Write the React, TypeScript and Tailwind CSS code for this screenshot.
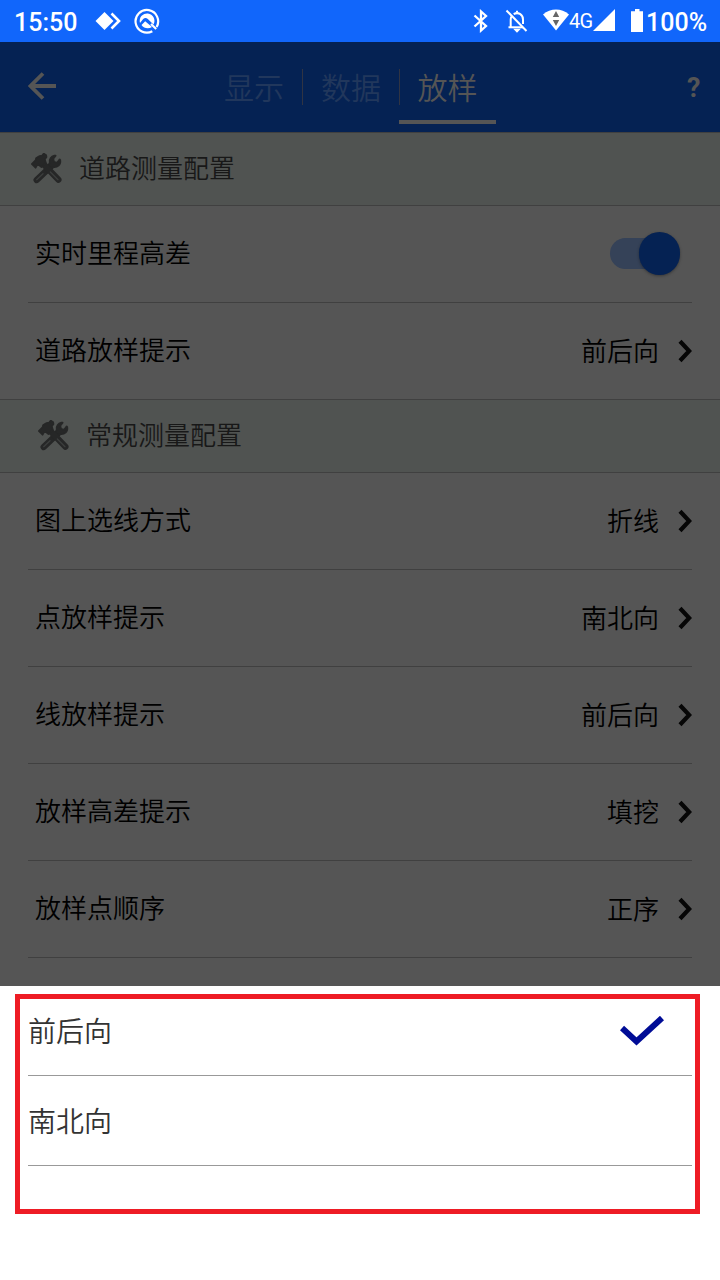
const stack = "font-['Roboto','Noto_Sans_CJK_SC',sans-serif]";

const roadItems = [{ label: "道路放样提示", value: "前后向" }];

const commonItems = [
  { label: "图上选线方式", value: "折线" },
  { label: "点放样提示", value: "南北向" },
  { label: "线放样提示", value: "前后向" },
  { label: "放样高差提示", value: "填挖" },
  { label: "放样点顺序", value: "正序" },
];

const options = [
  { label: "前后向", checked: true },
  { label: "南北向", checked: false },
];

const ToolsIcon = () => (
  <svg viewBox="0 0 93 93" className="mb-px h-[31px] w-[31px] shrink-0" fill="none">
    {/* wrench */}
    <path d="M17 81 L62 38" stroke="#262727" strokeWidth="19" strokeLinecap="round" />
    <path d="M70 8 C61 10 54 18 56 29 L51 39 L60 47 L67 42 C79 44 90 35 88 22 L86 19 L78 29 L69 26 L67 17 L74 8 Z" fill="#262727" stroke="#262727" strokeWidth="5" strokeLinejoin="round" />
    <path d="M17 80 L36 62" stroke="#3c3e3d" strokeWidth="4" strokeLinecap="round" />
    {/* hammer */}
    <path d="M36 32 L82 80" stroke="#262727" strokeWidth="19" strokeLinecap="round" />
    <path d="M2 33 L13 22 L15 15 C22 9 28 7 33 7 L38 1 L46 6 L47 12 L42 19 L45 29 L31 43 L20 34 L14 45 Z" fill="#262727" stroke="#262727" strokeWidth="4" strokeLinejoin="round" />
    <path d="M58 57 L81 80" stroke="#3c3e3d" strokeWidth="4" strokeLinecap="round" />
  </svg>
);

const Chevron = () => (
  <svg viewBox="0 0 14 24" className="mb-0.5 h-6 w-3.5" fill="none" stroke="#060606" strokeWidth="4.2">
    <path d="M2 2.3 L11.2 12 L2 21.7" />
  </svg>
);

const SectionHeader = ({ title, indent }: { title: string; indent: string }) => (
  <div className={`flex h-[73px] items-center border-b border-[#404040] bg-[#505351] ${indent}`}>
    <ToolsIcon />
    <h2 className="ml-[17px] text-[26px] leading-none text-[#181818]">{title}</h2>
  </div>
);

const Row = ({ label, value, last }: { label: string; value: string; last?: boolean }) => (
  <div className={last ? "border-b border-[#404040]" : ""}>
    <div className={`mx-7 flex items-center justify-between pl-[7px] ${last ? "h-24" : "h-[97px] border-b border-[#404040]"}`}>
      <span className="text-[26px] leading-none text-black">{label}</span>
      <div className="flex items-center gap-[19px] pt-px">
        <span className="pt-px text-[26px] leading-none text-black">{value}</span>
        <Chevron />
      </div>
    </div>
  </div>
);

const StatusBar = () => (
  <div className="flex h-[42px] items-center bg-[#1166fb] pl-3.5 text-white">
    <span className="w-[63px] pt-[3px] text-[25px] font-medium leading-none">15:50</span>
    <svg viewBox="0 0 26 20" className="ml-[18px] h-5 w-[26px]">
      <path d="M0.5 10 L9.5 1 L18.5 10 L9.5 19 Z" fill="white" />
      <path d="M16.5 2.5 L24 10 L16.5 17.5" fill="none" stroke="white" strokeWidth="2.6" />
    </svg>
    <svg viewBox="0 0 26 26" className="ml-[13px] h-[26px] w-[26px]" fill="none">
      <path d="M18.3 23.2 A11.3 11.3 0 1 1 22.6 19" stroke="white" strokeWidth="2.2" />
      <path d="M6 15 A7.4 7.4 0 1 1 19.5 16.5 L13.8 11 C12 9.4 10.2 10 8.8 11.5 Z" fill="white" />
      <path d="M7.5 17 L11.2 13.2 L18 19 C14.5 21.300 9.8 20.5 7.5 17 Z" fill="white" />
      <path d="M17 16 L22.200 21" stroke="white" strokeWidth="2.2" />
    </svg>
    {/* right side indicators */}
    <div className="ml-auto flex items-center">
      <svg viewBox="0 0 16 24" className="h-6 w-4" fill="none" stroke="white" strokeWidth="2.3">
        <path d="M1.5 6.5 L13 17 L8 21.5 V2.5 L13 7 L1.5 17.5" />
      </svg>
      <svg viewBox="0 0 24 24" className="ml-4 h-6 w-6" fill="none" stroke="white" strokeWidth="2">
        <path d="M1.5 1.5 L21.5 22" />
        <path d="M3.5 18.3 H18" />
        <path d="M5.7 18 V10.5 C5.7 9.2 6 8.2 6.7 7.2" />
        <path d="M8.7 5.2 C13 2.5 18 5.5 18 10.5 V15" />
        <path d="M9.8 20.5 H14.2 L12 22.8 Z M11 2.4 H13" fill="white" strokeWidth="1.4" />
      </svg>
      <svg viewBox="0 0 26 22" className="mb-[3px] ml-[14px] h-[22px] w-[26px]">
        <path d="M0 5.5 C7.5 -1.2 18.5 -1.2 26 5.5 L13 21.5 Z" fill="white" />
        <path d="M13 2 L16.2 8 H9.8 Z M13 17 L16.2 11 H9.8 Z" fill="#666" />
      </svg>
      <span className="w-6 text-[20px] font-normal leading-none tracking-[-0.8px]">4G</span>
      <svg viewBox="0 0 22 22" className="mb-0.5 h-[22px] w-[22px]">
        <path d="M22 0 V22 H0 Z" fill="white" />
      </svg>
      <svg viewBox="0 0 12 23" className="mb-0.5 ml-4 h-[23px] w-3">
        <path d="M4 0 H8.5 V2.3 H12 V23 H0 V2.3 H4 Z" fill="white" />
      </svg>
      <span className="ml-[3px] w-[74px] pt-[3px] text-[25px] font-medium leading-none">100%</span>
    </div>
  </div>
);

const Header = () => (
  <div className="flex h-[91px] items-center border-b border-[#404040] bg-[#052253] pl-7">
    <svg viewBox="0 0 28 28" className="mb-[3px] h-7 w-7" fill="none" stroke="#555555" strokeWidth="3.8">
      <path d="M28 14 H3 M15 1.5 L2.5 14 L15 26.5" />
    </svg>
    <nav className="ml-[150px] flex h-full items-center text-[30px] leading-none text-[#21375c]">
      <span className="flex h-9 w-[97px] items-center justify-center border-r border-[#303443] pt-[3px]">显示</span>
      <span className="flex h-9 w-[97px] items-center justify-center border-r border-[#303443] pt-[3px]">数据</span>
      <span className="relative flex h-9 w-[97px] items-center justify-center pr-0.5 pt-[3px] text-[#555555]">
        放样
        <span className="absolute -left-px top-[51px] h-1 w-[97px] bg-[#555555]" />
      </span>
    </nav>
    <span className="ml-auto w-[33px] pt-[3px] text-[27px] font-bold leading-none text-[#555555]">?</span>
  </div>
);

const App = () => {
  return (
    <div className={`flex h-[1280px] w-[720px] flex-col overflow-hidden bg-white font-[350] ${stack}`} lang="zh-CN">
      <StatusBar />
      <div className="h-[944px] bg-[#555555]">
        <Header />

        <SectionHeader title="道路测量配置" indent="pl-[31px]" />
        <div className="mx-7 flex h-[97px] items-center justify-between border-b border-[#404040] pl-[7px]">
          <span className="text-[26px] leading-none text-black">实时里程高差</span>
          <div className="mb-px mr-3 flex h-[43px] w-[70px] items-center">
            <div className="flex h-[31px] w-[66px] items-center rounded-full bg-[#354258] pl-[29px]">
              <div className="h-[43px] w-[41px] shrink-0 rounded-full bg-[#052253] shadow-[0_1px_3px_rgba(0,0,0,0.35)]" />
            </div>
          </div>
        </div>
        {roadItems.map((item) => (
          <Row key={item.label} {...item} last />
        ))}

        <SectionHeader title="常规测量配置" indent="pl-[38px]" />
        {commonItems.map((item) => (
          <Row key={item.label} {...item} />
        ))}
      </div>

      {/* Bottom sheet */}
      <div className="relative h-[294px] bg-white px-7">
        {options.map((option) => (
          <div key={option.label} className="flex h-[90px] items-center justify-between border-b border-[#999999]">
            <span className="pt-1 text-[28px] leading-none text-[#333333]">{option.label}</span>
            {option.checked && (
              <svg viewBox="0 0 44 30" className="mr-7 h-[30px] w-11" fill="none" stroke="#000c96" strokeWidth="6">
                <path d="M2 12 L16.5 25.5 L42 2" />
              </svg>
            )}
          </div>
        ))}
        <div className="pointer-events-none absolute left-[15px] top-2 h-[220px] w-[685px] border-[5px] border-[#ee1c25]" />
      </div>
    </div>
  );
};

export default App;
